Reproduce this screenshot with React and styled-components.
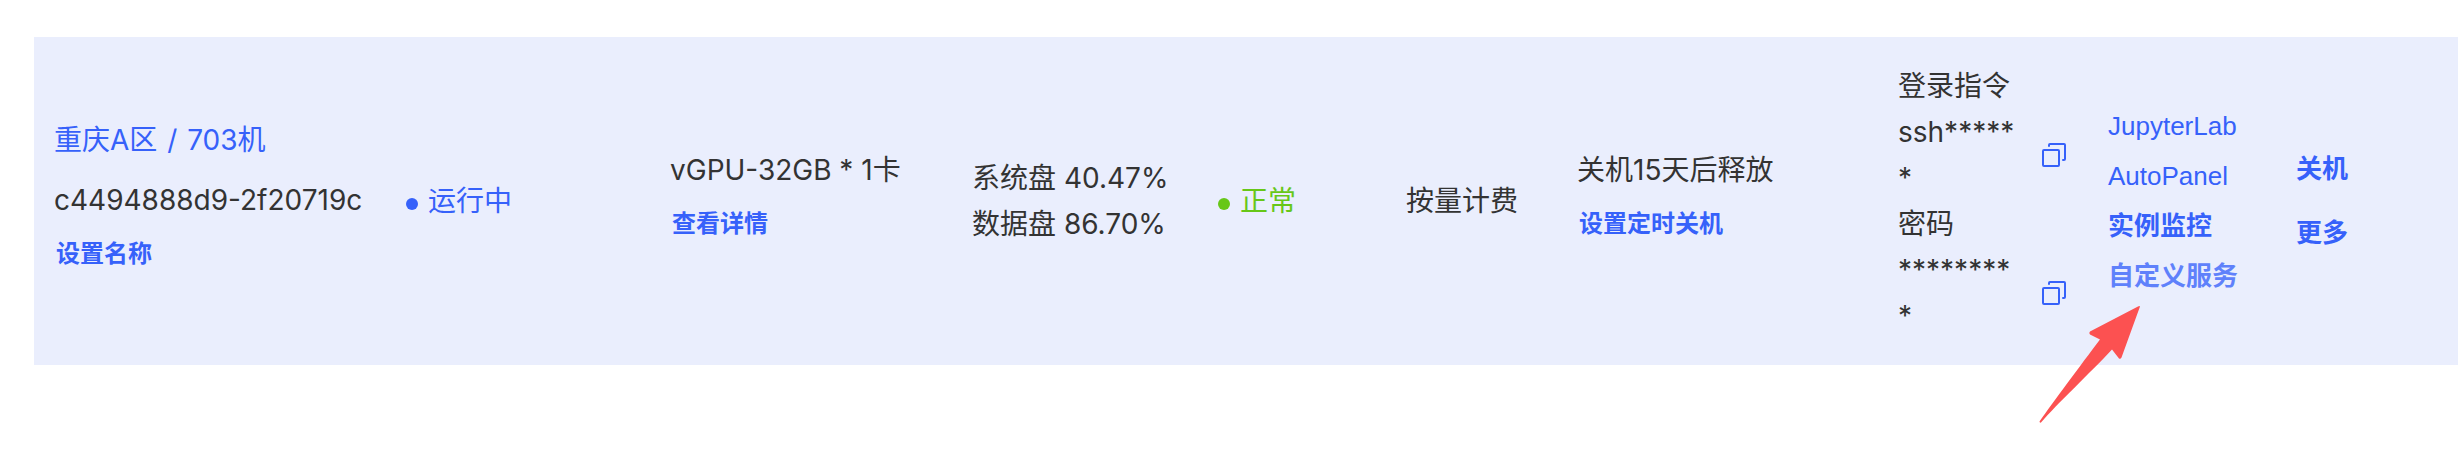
import React from 'react';
import styled, { createGlobalStyle } from 'styled-components';

const GlobalStyle = createGlobalStyle`
  body {
    margin: 0;
    background: #ffffff;
    color: #333333;
    font-family: Inter, 'Noto Sans CJK SC', sans-serif;
    font-size: 28px;
    line-height: 46px;
  }
`;

const Page = styled.main`
  padding: 37px 0 93px 34px;
`;

const Table = styled.table`
  width: 100%;
  table-layout: fixed;
  border-collapse: collapse;
  background: #eaeefd;
`;

const Col = styled.col`
  width: ${props => props.$width}px;
`;

const Cell = styled.td`
  padding: 26px 0 26px 20px;
  vertical-align: middle;
  white-space: nowrap;
`;

const RegionLink = styled.a`
  display: block;
  margin-bottom: 14px;
  color: #3661fa;
  text-decoration: none;
`;

const Slash = styled.span`
  margin: 0 2px;
`;

const Status = styled.div`
  display: flex;
  align-items: center;
  gap: 10px;
  color: ${props => props.$color};

  &::before {
    content: '';
    width: 12px;
    height: 12px;
    margin-top: 6px;
    border-radius: 50%;
    background: currentColor;
  }
`;

const TextButton = styled.button`
  display: block;
  padding: 0 2px 4px;
  border: 0;
  background: none;
  color: #3661fa;
  font-family: 'Noto Sans CJK SC', sans-serif;
  font-size: 24px;
  font-weight: 700;
  line-height: 58px;
  cursor: pointer;
`;

const Tools = styled.div`
  display: flex;
  flex-direction: column;
  align-items: flex-start;
`;

const ToolItem = styled.div`
  position: relative;
  display: flex;
`;

const ToolLink = styled.a`
  color: ${props => (props.$active ? '#5f81fb' : '#3661fa')};
  font-family: 'Liberation Sans', 'Noto Sans CJK SC', sans-serif;
  font-size: 26px;
  font-weight: ${props => (props.$latin ? 400 : 700)};
  line-height: 50px;
  text-decoration: none;
`;

const ActionButton = styled(TextButton)`
  padding: 0 0 4px;
  font-size: 26px;
  line-height: 60px;
`;

const Secret = styled.div`
  display: flex;
  align-items: center;
  gap: 24px;
`;

const Masked = styled.span`
  width: 120px;
  white-space: normal;
  word-break: break-all;
`;

const CopyButton = styled.button`
  display: flex;
  padding: 0;
  border: 0;
  background: none;
  color: #3661fa;
  cursor: pointer;
`;

const Arrow = styled.svg`
  position: absolute;
  top: 100%;
  left: -69px;
  margin-top: 4px;
  pointer-events: none;
`;

const columns = [352, 264, 302, 246, 188, 171, 321, 210, 188, 182];

const secrets = [
  { label: '登录指令', value: 'ssh******' },
  { label: '密码', value: '*********' },
];

const tools = [
  { name: 'JupyterLab', latin: true },
  { name: 'AutoPanel', latin: true },
  { name: '实例监控' },
  { name: '自定义服务', active: true },
];

function CopyIcon() {
  return (
    <svg width="24" height="24" viewBox="0 0 24 24" fill="none" stroke="currentColor" strokeWidth="2" strokeLinecap="round" strokeLinejoin="round">
      <rect x="1" y="7" width="16" height="16" rx="1" />
      <path d="M7 3V2a1 1 0 0 1 1-1h14a1 1 0 0 1 1 1v14a1 1 0 0 1-1 1h-1" />
    </svg>
  );
}

function Pointer() {
  return (
    <Arrow width="102" height="119" viewBox="0 0 102 119" fill="#fc5151" aria-hidden="true">
      <path d="M101 1.5 Q100.500 .5 99 1.500 L51 26.500 Q49.500 28 51 29.500 L61 34.500 C41 61 15 96 .5 116.500 Q.5 118 2 117.500 C18 99 51 68 73 44.500 L80 53.500 Q81.500 54.500 82.500 52.500 Z" />
    </Arrow>
  );
}

function App() {
  return (
    <Page>
      <GlobalStyle />
      <Table>
        <colgroup>
          {columns.map((width, index) => (
            <Col key={index} $width={width} />
          ))}
        </colgroup>
        <tbody>
          <tr>
            <Cell>
              <RegionLink href="#instance">
                重庆A区 <Slash>/</Slash> 703机
              </RegionLink>
              <div>c4494888d9-2f20719c</div>
              <TextButton type="button">设置名称</TextButton>
            </Cell>
            <Cell>
              <Status $color="#3661fa">运行中</Status>
            </Cell>
            <Cell>
              <div>vGPU-32GB * 1卡</div>
              <TextButton type="button">查看详情</TextButton>
            </Cell>
            <Cell>
              <div>系统盘 40.47%</div>
              <div>数据盘 86.70%</div>
            </Cell>
            <Cell>
              <Status $color="#67c718">正常</Status>
            </Cell>
            <Cell>按量计费</Cell>
            <Cell>
              <div>关机15天后释放</div>
              <TextButton type="button">设置定时关机</TextButton>
            </Cell>
            <Cell>
              {secrets.map(({ label, value }) => (
                <div key={label}>
                  <div>{label}</div>
                  <Secret>
                    <Masked>{value}</Masked>
                    <CopyButton type="button" aria-label={`复制${label}`}>
                      <CopyIcon />
                    </CopyButton>
                  </Secret>
                </div>
              ))}
            </Cell>
            <Cell>
              <Tools>
                {tools.map(({ name, latin, active }) => (
                  <ToolItem key={name}>
                    <ToolLink href="#tools" $latin={latin} $active={active}>{name}</ToolLink>
                    {active && <Pointer />}
                  </ToolItem>
                ))}
              </Tools>
            </Cell>
            <Cell>
              <ActionButton type="button">关机</ActionButton>
              <ActionButton type="button">更多</ActionButton>
            </Cell>
          </tr>
        </tbody>
      </Table>
    </Page>
  );
}

export default App;
